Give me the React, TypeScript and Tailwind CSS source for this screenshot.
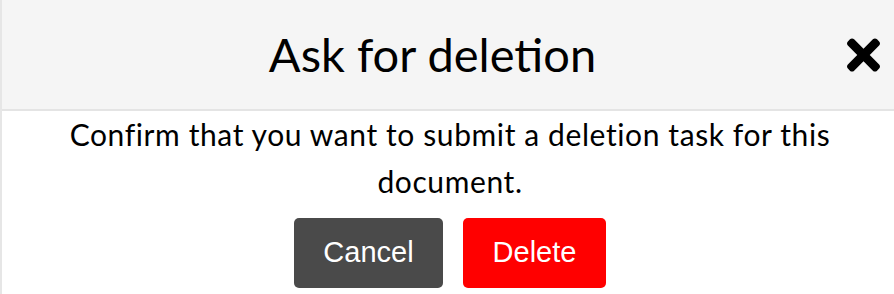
import React from 'react';

function CloseIcon() {
  return (
    <svg viewBox="0 80 352 352" className="h-[34px] w-[33px]" fill="currentColor">
      <path d="M242.72 256l100.07-100.07c12.28-12.28 12.28-32.19 0-44.48l-22.24-22.24c-12.28-12.28-32.19-12.28-44.48 0L176 189.28 75.93 89.21c-12.28-12.28-32.19-12.28-44.48 0L9.21 111.45c-12.28 12.28-12.28 32.19 0 44.48L109.28 256 9.21 356.07c-12.28 12.28-12.28 32.19 0 44.48l22.24 22.24c12.28 12.28 32.2 12.28 44.48 0L176 322.72l100.07 100.07c12.28 12.28 32.2 12.28 44.48 0l22.24-22.24c12.28-12.28 12.28-32.19 0-44.48L242.72 256z" />
    </svg>
  );
}

export default function App() {
  return (
    <div className="h-[294px] w-[894px] overflow-hidden border-l-2 border-[#e6e6e6] bg-white font-['Lato',sans-serif] text-black">
      <div className="flex h-[111px] items-center border-b-2 border-[#e4e4e4] bg-[#f5f5f5] pl-4 pr-[14px]">
        <h1 className="flex-1 text-center text-[47px] leading-none font-normal">Ask for deletion</h1>
        <button className="text-black">
          <CloseIcon />
        </button>
      </div>
      <div className="flex flex-col items-center pl-[28px] pr-6">
        <p className="text-center text-[30px] leading-[47px] tracking-[0.6px]">
          Confirm that you want to submit a deletion task for this document.
        </p>
        <div className="mt-[13px] flex gap-5 font-['Liberation_Sans',Arial,sans-serif]">
          <button className="h-[70px] w-[149px] rounded-[5px] bg-[#4a4a4a] text-[29px] text-white">Cancel</button>
          <button className="h-[70px] w-[143px] rounded-[5px] bg-[#ff0000] text-[29px] text-white">Delete</button>
        </div>
      </div>
    </div>
  );
}
